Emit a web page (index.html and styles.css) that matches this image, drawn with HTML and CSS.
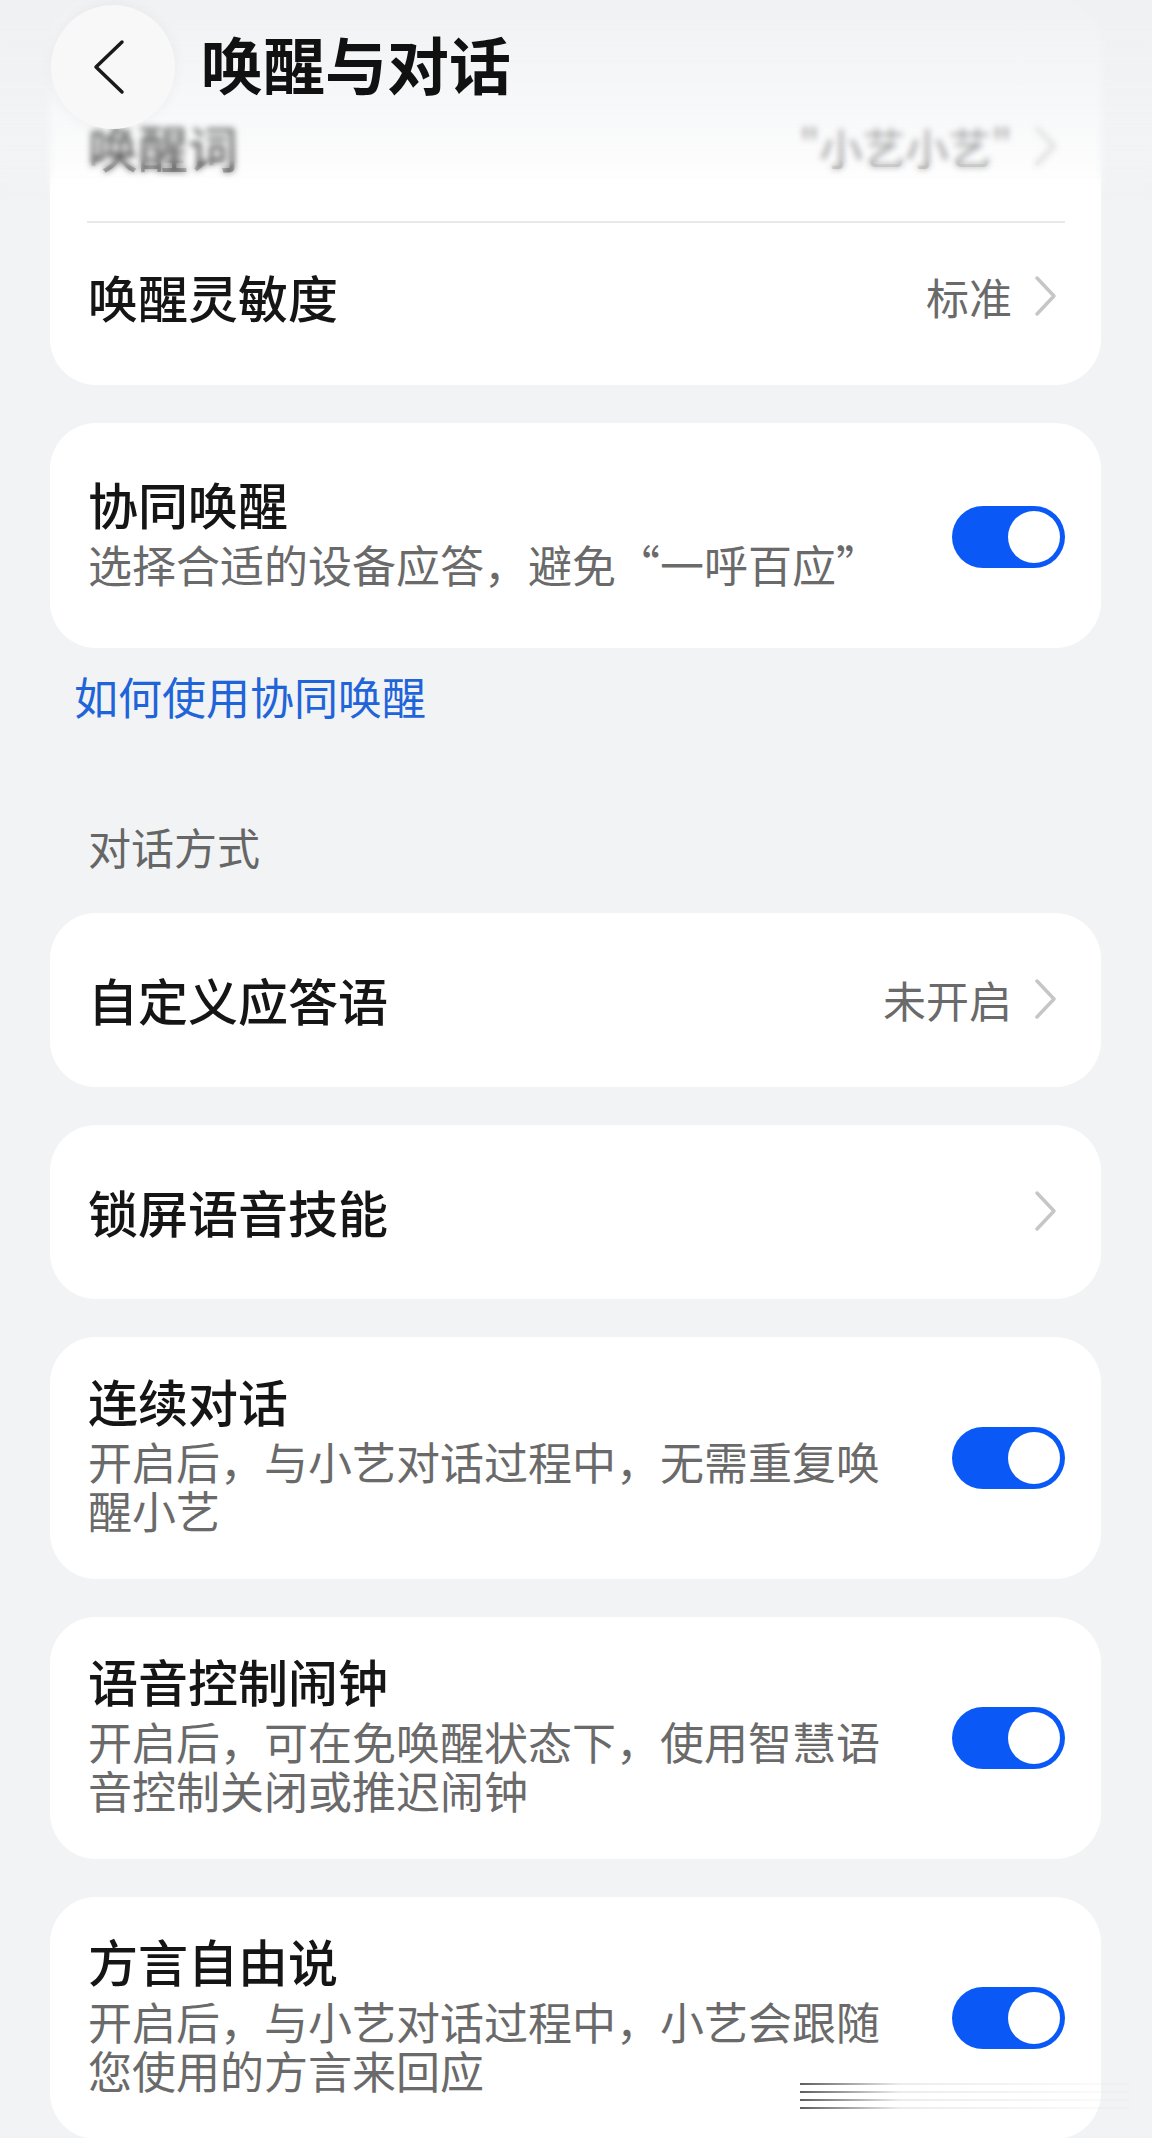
FILE: index.html
```html
<!DOCTYPE html>
<html lang="zh-CN">

<head>
    <meta charset="UTF-8">
    <meta name="viewport" content="width=device-width, initial-scale=1.0">
    <title>唤醒与对话</title>
    <link rel="stylesheet" href="styles.css">
</head>

<body>
    <header class="topbar">
        <button class="back-btn" aria-label="返回">
            <svg width="124" height="124" viewBox="0 0 124 124">
                <polyline points="71,37 45,62 71,87" fill="none" stroke="#1a1a1a" stroke-width="3.5" stroke-linecap="round" stroke-linejoin="round" />
            </svg>
        </button>
        <h1 class="page-title">唤醒与对话</h1>
    </header>

    <main class="page">
        <section class="card card-group">
            <div class="row row-first">
                <span class="label">唤醒词</span>
                <span class="value">"小艺小艺"</span>
                <svg class="chevron" width="24" height="42" viewBox="0 0 24 42">
                    <polyline points="3,3 20,21 3,39" fill="none" stroke="#c6c6c6" stroke-width="3.5" stroke-linecap="round" stroke-linejoin="round" />
                </svg>
            </div>
            <div class="divider"></div>
            <div class="row">
                <span class="label">唤醒灵敏度</span>
                <span class="value">标准</span>
                <svg class="chevron" width="24" height="42" viewBox="0 0 24 42">
                    <polyline points="3,3 20,21 3,39" fill="none" stroke="#c6c6c6" stroke-width="3.5" stroke-linecap="round" stroke-linejoin="round" />
                </svg>
            </div>
        </section>

        <section class="card switch-card switch-card-single">
            <div class="text">
                <div class="label">协同唤醒</div>
                <div class="desc">选择合适的设备应答，避免“一呼百应”</div>
            </div>
            <span class="toggle"><span class="knob"></span></span>
        </section>

        <a class="help-link" href="#">如何使用协同唤醒</a>

        <h2 class="section-title">对话方式</h2>

        <section class="card link-card">
            <span class="label">自定义应答语</span>
            <span class="value">未开启</span>
            <svg class="chevron" width="24" height="42" viewBox="0 0 24 42">
                <polyline points="3,3 20,21 3,39" fill="none" stroke="#c6c6c6" stroke-width="3.5" stroke-linecap="round" stroke-linejoin="round" />
            </svg>
        </section>

        <section class="card link-card">
            <span class="label">锁屏语音技能</span>
            <svg class="chevron" width="24" height="42" viewBox="0 0 24 42">
                <polyline points="3,3 20,21 3,39" fill="none" stroke="#c6c6c6" stroke-width="3.5" stroke-linecap="round" stroke-linejoin="round" />
            </svg>
        </section>

        <section class="card switch-card">
            <div class="text">
                <div class="label">连续对话</div>
                <div class="desc">开启后，与小艺对话过程中，无需重复唤醒小艺</div>
            </div>
            <span class="toggle"><span class="knob"></span></span>
        </section>

        <section class="card switch-card">
            <div class="text">
                <div class="label">语音控制闹钟</div>
                <div class="desc">开启后，可在免唤醒状态下，使用智慧语音控制关闭或推迟闹钟</div>
            </div>
            <span class="toggle"><span class="knob"></span></span>
        </section>

        <section class="card switch-card">
            <div class="text">
                <div class="label">方言自由说</div>
                <div class="desc">开启后，与小艺对话过程中，小艺会跟随您使用的方言来回应</div>
            </div>
            <span class="toggle"><span class="knob"></span></span>
        </section>
    </main>

    <div class="watermark">
        <span></span>
        <span></span>
        <span></span>
        <span></span>
    </div>
</body>

</html>
```

FILE: styles.css
```css
body {
    margin: 0;
    background: #f1f3f5;
    font-family: "Noto Sans CJK SC", "Noto Sans", sans-serif;
    color: #1a1a1a;
    position: relative;
    overflow: hidden;
}

/* frosted title bar that floats over the list */
.topbar {
    position: absolute;
    top: 0;
    left: 0;
    right: 0;
    height: 200px;
    display: flex;
    align-items: flex-start;
    background: linear-gradient(to bottom, rgba(239, 240, 242, 0.9), rgba(242, 243, 245, 0.55) 55%, rgba(255, 255, 255, 0.1));
    backdrop-filter: blur(3px);
    -webkit-backdrop-filter: blur(3px);
    mask-image: linear-gradient(to bottom, #000 80%, transparent);
    -webkit-mask-image: linear-gradient(to bottom, #000 80%, transparent);
    z-index: 5;
}

.back-btn {
    width: 124px;
    height: 124px;
    margin: 5px 0 0 51px;
    padding: 0;
    border: none;
    border-radius: 50%;
    background: #f8f8f9;
    box-shadow: 0 0 14px rgba(0, 0, 0, 0.05);
    display: flex;
    align-items: center;
    justify-content: center;
}

.page-title {
    margin: 0 0 0 26px;
    height: 126px;
    line-height: 126px;
    font-size: 62px;
    font-weight: 700;
    color: #111;
}

.page {
    padding: 0 51px 0 50px;
}

.card {
    background: #fff;
    border-radius: 46px;
}

.card + .card {
    margin-top: 38px;
}

.card-group {
    padding: 0 0 16px;
}

.row {
    height: 146px;
    display: flex;
    align-items: center;
    padding: 0 43px 0 38px;
}

.row-first {
    height: 150px;
    padding-top: 71px;
}

.divider {
    height: 2px;
    margin: 0 36px 0 37px;
    background: #e8e9eb;
}

.label {
    font-size: 50px;
    line-height: 62px;
    font-weight: 500;
    color: #151515;
}

.row .label,
.link-card .label {
    flex: 1;
}

.value {
    font-size: 43px;
    color: #6a6a6a;
    margin-right: 22px;
}

.chevron {
    display: block;
}

.link-card {
    display: flex;
    align-items: center;
    padding: 55px 43px 57px 38px;
}

.switch-card {
    display: flex;
    align-items: center;
    padding: 32px 36px 44px 38px;
}

.switch-card-single {
    padding-top: 49px;
    padding-bottom: 59px;
}

.switch-card .text {
    flex: 1;
    margin-right: 48px;
}

.desc {
    margin-top: 6px;
    font-size: 44px;
    line-height: 49px;
    color: #6a6a6a;
}

.toggle {
    flex: none;
    width: 113px;
    height: 62px;
    margin-top: 12px;
    border-radius: 31px;
    background: #0a59f7;
    display: flex;
    align-items: center;
    justify-content: flex-end;
    padding-right: 5px;
    box-sizing: border-box;
}

.knob {
    width: 52px;
    height: 52px;
    border-radius: 50%;
    background: #fff;
}

.help-link {
    display: block;
    margin: 24px 0 0 24px;
    font-size: 44px;
    line-height: 49px;
    color: #1f64d8;
    text-decoration: none;
}

.section-title {
    margin: 101px 0 42px 38px;
    font-size: 43px;
    line-height: 49px;
    font-weight: 400;
    color: #666;
}

.watermark {
    position: absolute;
    left: 800px;
    top: 2083px;
    width: 330px;
    display: flex;
    flex-direction: column;
    gap: 6px;
}

.watermark span {
    height: 2px;
    background: linear-gradient(to right, rgba(40, 40, 40, 0.75), rgba(180, 180, 180, 0.25) 30%, rgba(220, 220, 220, 0.1));
}
```
